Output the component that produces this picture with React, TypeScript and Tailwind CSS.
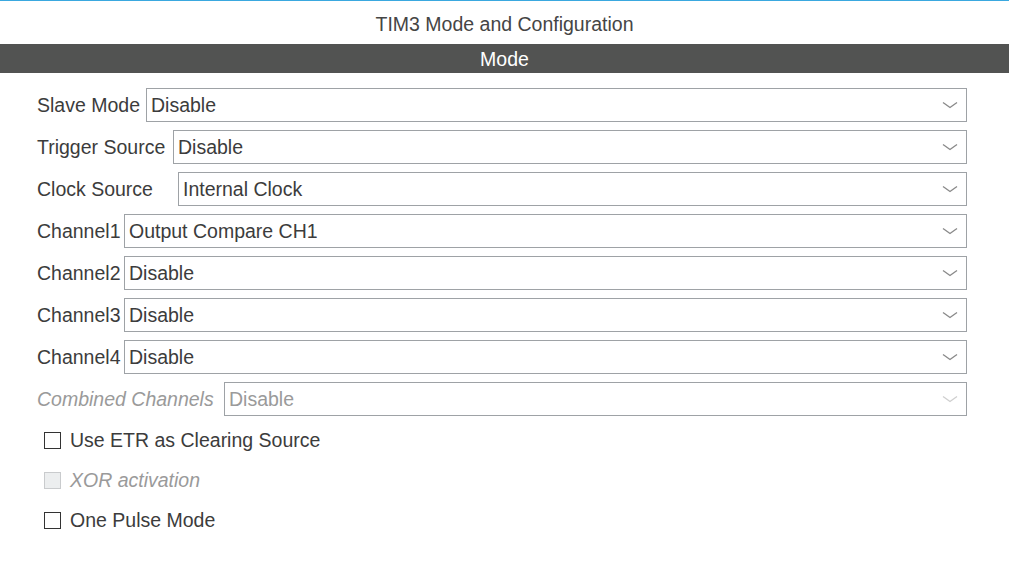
import React from "react";

type Row = { label: string; value: string; w: string; disabled?: boolean };

const rows: Row[] = [
  { label: "Slave Mode", value: "Disable", w: "w-[109px]" },
  { label: "Trigger Source", value: "Disable", w: "w-[136px]" },
  { label: "Clock Source", value: "Internal Clock", w: "w-[141px]" },
  { label: "Channel1", value: "Output Compare CH1", w: "w-[87px]" },
  { label: "Channel2", value: "Disable", w: "w-[87px]" },
  { label: "Channel3", value: "Disable", w: "w-[87px]" },
  { label: "Channel4", value: "Disable", w: "w-[87px]" },
  { label: "Combined Channels", value: "Disable", w: "w-[187px]", disabled: true },
];

function Chevron({ disabled }: { disabled?: boolean }) {
  return (
    <svg width="16" height="8" viewBox="0 0 16 8" className="mr-[8px] shrink-0">
      <path
        d="M1 1.5 L8 6.5 L15 1.5"
        fill="none"
        stroke={disabled ? "#cfcfcf" : "#8a8a8a"}
        strokeWidth="1.4"
      />
    </svg>
  );
}

function Check({ label, disabled }: { label: string; disabled?: boolean }) {
  return (
    <div className="h-[40px] flex items-center pl-[7px]">
      <div
        className={
          disabled
            ? "w-[17px] h-[17px] border border-[#c9cbcd] bg-[#eceeef]"
            : "w-[17px] h-[17px] border border-[#333333] bg-white"
        }
      />
      <span
        className={
          disabled
            ? "ml-[9px] pt-[2px] text-[19.5px] italic text-[#9a9a9a]"
            : "ml-[9px] pt-[2px] text-[19.5px] text-[#3c3c3c]"
        }
      >
        {label}
      </span>
    </div>
  );
}

export default function App() {
  return (
    <div className="w-[1009px] h-[580px] bg-white font-['Liberation_Sans',Arial,sans-serif] border-t border-[#3aa8df] overflow-hidden">
      <div className="h-[43px] pt-[4px] flex items-center justify-center text-[19.5px] text-[#454545]">
        TIM3 Mode and Configuration
      </div>
      <div className="h-[29px] pt-[3px] bg-[#525352] flex items-center justify-center text-[19.5px] text-white">
        Mode
      </div>
      <div className="pl-[37px] pr-[42px] pt-[15px]">
        <div className="flex flex-col gap-[8px]">
          {rows.map((r) => (
            <div key={r.label} className="h-[34px] flex items-center">
              <div
                className={
                  r.w +
                  (r.disabled
                    ? " shrink-0 pt-[2px] text-[19.5px] italic text-[#9a9a9a]"
                    : " shrink-0 pt-[2px] text-[19.5px] text-[#3c3c3c]")
                }
              >
                {r.label}
              </div>
              <div className="flex-1 h-full border border-[#9ea2a6] flex items-center justify-between">
                <span
                  className={
                    r.disabled
                      ? "pl-[4px] pt-[2px] text-[19.5px] text-[#9a9a9a]"
                      : "pl-[4px] pt-[2px] text-[19.5px] text-[#3c3c3c]"
                  }
                >
                  {r.value}
                </span>
                <Chevron disabled={r.disabled} />
              </div>
            </div>
          ))}
        </div>
        <div className="pt-[4px]">
          <Check label="Use ETR as Clearing Source" />
          <Check label="XOR activation" disabled />
          <Check label="One Pulse Mode" />
        </div>
      </div>
    </div>
  );
}
